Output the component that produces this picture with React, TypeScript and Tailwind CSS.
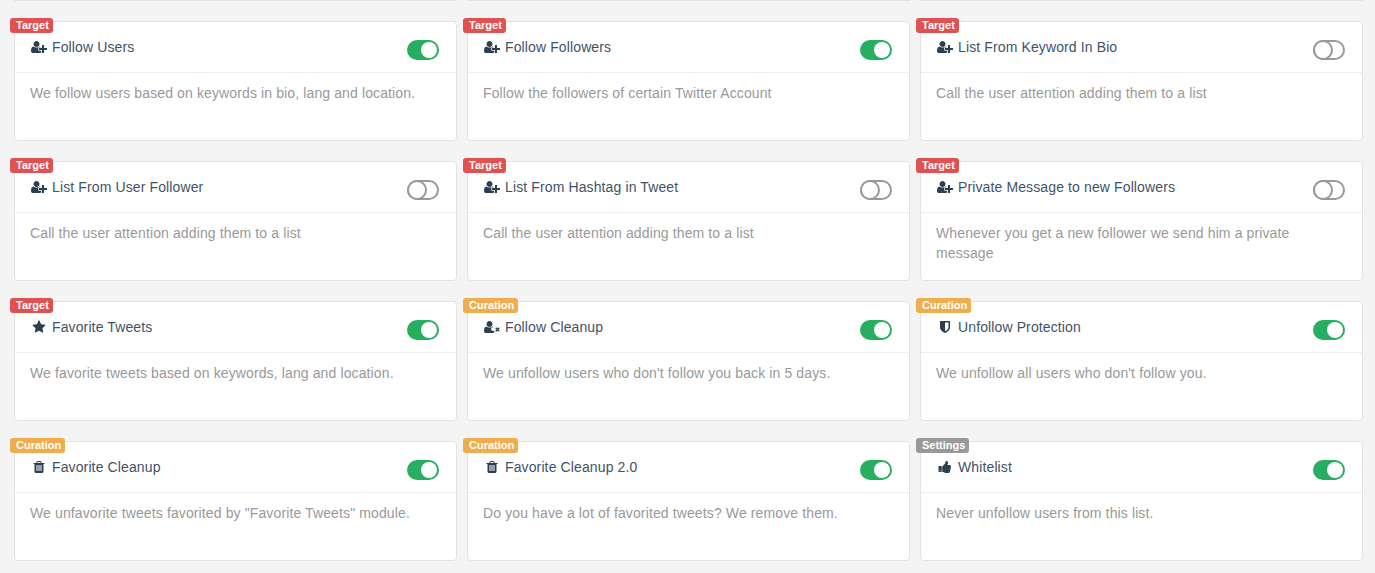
import type { ReactNode } from 'react';

type Kind = 'Target' | 'Curation' | 'Settings';
type IconName = 'userPlus' | 'userTimes' | 'star' | 'shield' | 'trash' | 'thumb';

interface Module {
  kind: Kind;
  title: string;
  text: string;
  on: boolean;
  icon: IconName;
}

const modules: Module[] = [
  { kind: 'Target', title: 'Follow Users', text: 'We follow users based on keywords in bio, lang and location.', on: true, icon: 'userPlus' },
  { kind: 'Target', title: 'Follow Followers', text: 'Follow the followers of certain Twitter Account', on: true, icon: 'userPlus' },
  { kind: 'Target', title: 'List From Keyword In Bio', text: 'Call the user attention adding them to a list', on: false, icon: 'userPlus' },
  { kind: 'Target', title: 'List From User Follower', text: 'Call the user attention adding them to a list', on: false, icon: 'userPlus' },
  { kind: 'Target', title: 'List From Hashtag in Tweet', text: 'Call the user attention adding them to a list', on: false, icon: 'userPlus' },
  { kind: 'Target', title: 'Private Message to new Followers', text: 'Whenever you get a new follower we send him a private message', on: false, icon: 'userPlus' },
  { kind: 'Target', title: 'Favorite Tweets', text: 'We favorite tweets based on keywords, lang and location.', on: true, icon: 'star' },
  { kind: 'Curation', title: 'Follow Cleanup', text: "We unfollow users who don't follow you back in 5 days.", on: true, icon: 'userTimes' },
  { kind: 'Curation', title: 'Unfollow Protection', text: "We unfollow all users who don't follow you.", on: true, icon: 'shield' },
  { kind: 'Curation', title: 'Favorite Cleanup', text: 'We unfavorite tweets favorited by "Favorite Tweets" module.', on: true, icon: 'trash' },
  { kind: 'Curation', title: 'Favorite Cleanup 2.0', text: 'Do you have a lot of favorited tweets? We remove them.', on: true, icon: 'trash' },
  { kind: 'Settings', title: 'Whitelist', text: 'Never unfollow users from this list.', on: true, icon: 'thumb' },
];

const badgeColors: Record<Kind, string> = {
  Target: 'bg-[#e05252]',
  Curation: 'bg-[#f0ad4e]',
  Settings: 'bg-[#999999]',
};

const head = 'M704 896q-159 0-271.5-112.5t-112.5-271.5 112.5-271.5 271.5-112.5 271.5 112.5 112.5 271.5-112.5 271.5-271.5 112.5z';
const body =
  'M928 1248q0 52 38 90t90 38h256v238q-68 50-171 50h-874q-121 0-194-69t-73-190q0-53 3.5-103.5t14-109 26.5-108.5 43-97.5 62-81 85.5-53.5 111.5-20q19 0 39 17 79 61 154.5 91.5t164.5 30.5 164.5-30.5 154.5-91.5q20-17 39-17 132 0 217 96h-223q-52 0-90 38t-38 90v192z';
const plus =
  'M1664 1024h352q13 0 22.5 9.5t9.5 22.5v192q0 13-9.5 22.5t-22.5 9.5h-352v352q0 13-9.5 22.5t-22.5 9.5h-192q-13 0-22.5-9.5t-9.5-22.5v-352h-352q-13 0-22.5-9.5t-9.5-22.5v-192q0-13 9.5-22.5t22.5-9.5h352v-352q0-13 9.5-22.5t22.5-9.5h192q13 0 22.5 9.5t9.5 22.5v352z';

const icons: Record<IconName, ReactNode> = {
  userPlus: (
    <svg viewBox="0 0 2048 1792" className="h-[14px] w-4 fill-[#2c3e50]">
      <path d={head + body + plus} />
    </svg>
  ),
  userTimes: (
    <svg viewBox="0 0 2048 1792" className="h-[14px] w-4 fill-[#2c3e50]">
      <path d={head + body} />
      <path d="M1500 1000l450 440M1950 1000l-450 440" className="fill-none stroke-[#2c3e50] stroke-[200]" />
    </svg>
  ),
  star: (
    <svg viewBox="0 0 1792 1792" className="h-[14px] w-[14px] fill-[#2c3e50]">
      <path d="M1728 647q0 22-26 48l-363 354 86 500q1 7 1 20 0 21-10.5 35.5t-30.5 14.5q-19 0-40-12l-449-236-449 236q-22 12-40 12-21 0-31.5-14.5t-10.5-35.5q0-6 2-20l86-500-364-354q-25-27-25-48 0-37 56-46l502-73 225-455q19-41 49-41t49 41l225 455 502 73q56 9 56 46z" />
    </svg>
  ),
  shield: (
    <svg viewBox="0 0 1792 1792" className="h-[14px] w-[14px] fill-[#2c3e50]">
      <path d="M1344 960v-640h-448v1137q119-63 213-137 235-184 235-360zm192-768v768q0 86-33.5 170.5t-83 150-118 127.5-126.5 103-121 77.5-89.5 49.5-42 20q-12 6-26 6t-26-6q-16-7-42-20t-89.5-49.5-121-77.5-126.5-103-118-127.5-83-150-33.5-170.5v-768q0-26 19-45t45-19h1152q26 0 45 19t19 45z" />
    </svg>
  ),
  trash: (
    <svg viewBox="0 0 1792 1792" className="h-[14px] w-[14px] fill-[#2c3e50]">
      <path d="M704 1376v-704q0-14-9-23t-23-9h-64q-14 0-23 9t-9 23v704q0 14 9 23t23 9h64q14 0 23-9t9-23zm256 0v-704q0-14-9-23t-23-9h-64q-14 0-23 9t-9 23v704q0 14 9 23t23 9h64q14 0 23-9t9-23zm256 0v-704q0-14-9-23t-23-9h-64q-14 0-23 9t-9 23v704q0 14 9 23t23 9h64q14 0 23-9t9-23zm-544-992h448l-48-117q-7-9-17-11h-317q-10 2-17 11zm928 32v64q0 14-9 23t-23 9h-96v948q0 83-47 143.5t-113 60.5h-832q-66 0-113-58.5t-47-141.5v-952h-96q-14 0-23-9t-9-23v-64q0-14 9-23t23-9h309l70-167q15-37 54-63t79-26h320q40 0 79 26t54 63l70 167h309q14 0 23 9t9 23z" />
    </svg>
  ),
  thumb: (
    <svg viewBox="0 0 1792 1792" className="h-[14px] w-[14px] fill-[#2c3e50]">
      <path d="M320 1344q0-26-19-45t-45-19q-27 0-45.5 19t-18.5 45q0 27 18.5 45.5t45.5 18.5q26 0 45-18.5t19-45.5zm160-512v640q0 26-19 45t-45 19h-288q-26 0-45-19t-19-45v-640q0-26 19-45t45-19h288q26 0 45 19t19 45zm1184 0q0 86-55 149 15 44 15 76 3 76-43 137 17 56 0 117-15 57-54 94 9 112-49 181-64 76-197 78h-129q-66 0-144-15.5t-121.5-29-120.5-39.5q-123-43-158-44-26-1-45-19.5t-19-44.5v-641q0-25 18-43.5t43-20.5q24-2 76-59t101-121q68-87 101-120 18-18 31-48t17.5-48.5 13.5-60.5q7-39 12.5-61t19.5-52 34-50q19-19 45-19 46 0 82.5 10.5t60 26 40 40.5 24 45 12 50 5 45 .5 39q0 38-9.5 76t-19 60-27.5 56q-3 6-10 18t-11 22-8 24h277q78 0 135 57t57 135z" />
    </svg>
  ),
};

function Toggle({ on }: { on: boolean }) {
  if (on) {
    return (
      <div className="flex h-5 w-8 items-center justify-end rounded-full bg-[#27ae60] px-[2px]">
        <div className="h-4 w-4 rounded-full bg-white" />
      </div>
    );
  }
  return (
    <div className="h-5 w-8 rounded-full border-2 border-[#999999] bg-white">
      <div className="-ml-[2px] -mt-[2px] h-5 w-5 rounded-full border-2 border-[#999999] bg-white" />
    </div>
  );
}

function ModuleCard({ module }: { module: Module }) {
  return (
    <div className="relative h-[120px] rounded border border-[#e3e3e3] bg-white">
      <span
        className={`absolute -left-[5px] -top-[4px] rounded-[3px] pl-[6px] pr-1 text-[11px] font-bold leading-[15px] text-white ${badgeColors[module.kind]}`}
      >
        {module.kind}
      </span>
      <div className="flex h-[51px] items-start justify-between border-b border-[#eeeeee] pl-4 pr-[17px]">
        <div className="flex items-center pt-[15px] text-sm leading-5 tracking-[0.12px] text-[#3f5368]">
          <span className="flex w-[21px]">
            <span className="flex w-4 justify-center">{icons[module.icon]}</span>
          </span>
          {module.title}
        </div>
        <div className="pt-[18px]">
          <Toggle on={module.on} />
        </div>
      </div>
      <p className="px-[15px] pt-[10px] text-sm leading-5 tracking-[0.12px] text-[#999999]">{module.text}</p>
    </div>
  );
}

export default function App() {
  return (
    <div className="h-[573px] overflow-hidden bg-[#f4f4f4] pl-[14px] font-['Liberation_Sans',Arial,sans-serif]">
      <div className="grid grid-cols-[443px_443px_443px] gap-x-[10px] gap-y-5">
        <div className="h-px bg-[#e3e3e3]" />
        <div className="h-px bg-[#e3e3e3]" />
        <div className="h-px bg-[#e3e3e3]" />
        {modules.map((module) => (
          <ModuleCard key={module.title} module={module} />
        ))}
      </div>
    </div>
  );
}
